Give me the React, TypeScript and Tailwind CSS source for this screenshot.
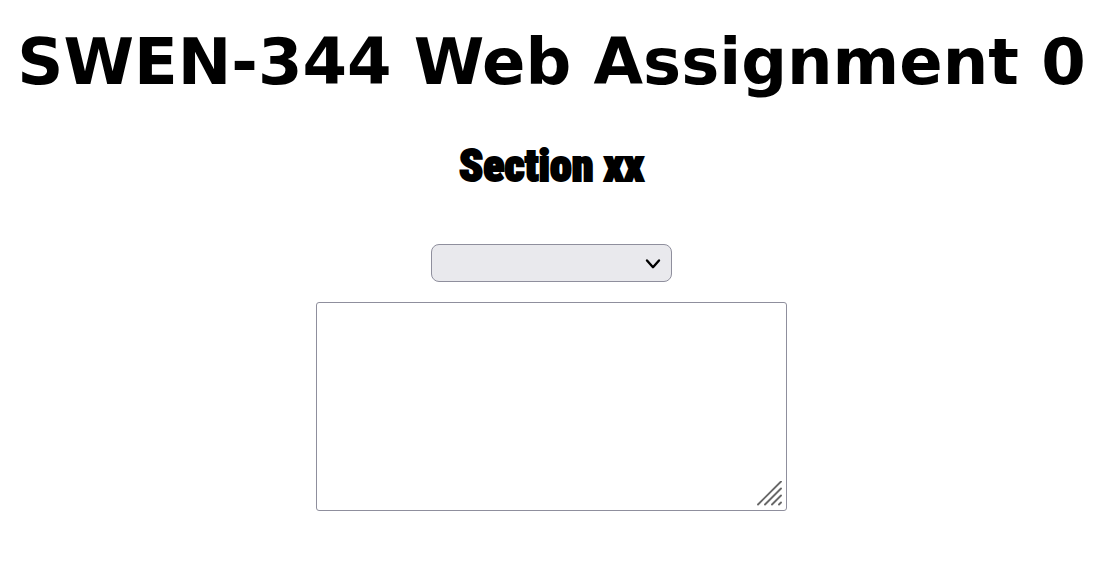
export default function App() {
  return (
    <main className="flex flex-col items-center bg-white pr-[17px] pb-[61px] text-black">
      <h1 className="mt-6 whitespace-nowrap font-[Verdana,'DejaVu_Sans',sans-serif] text-[64px] font-bold leading-[76px]">
        SWEN-344 Web Assignment 0
      </h1>
      <h2 className="mt-[38px] font-[Impact,'Roboto_Condensed',Roboto,sans-serif] text-[44px] font-black leading-[56px] [-webkit-text-stroke:2px_black]">
        Section xx
      </h2>
      <div className="relative mt-[50px] w-[241px]">
        <select
          aria-label="Section"
          className="block h-[38px] w-full appearance-none rounded-lg border border-[#8f8f9d] bg-[#e9e9ed] px-3 text-2xl outline-none"
        />
        <svg
          className="pointer-events-none absolute top-[14px] right-[11px] h-3 w-4"
          viewBox="0 0 16 12"
          fill="none"
          stroke="black"
          strokeWidth="2.4"
          strokeLinecap="round"
          strokeLinejoin="round"
          aria-hidden="true"
        >
          <path d="M2 2.5 8 9.2 14 2.5" />
        </svg>
      </div>
      <div className="relative mt-5 w-[471px]">
        <textarea
          aria-label="Comments"
          className="block h-[209px] w-full resize-none rounded-[3px] border border-[#8f8f9d] bg-white p-1 text-2xl outline-none"
        />
        <svg
          className="pointer-events-none absolute right-1 bottom-1 size-[26px]"
          viewBox="0 0 26 26"
          fill="none"
          stroke="#686868"
          strokeWidth="1.9"
          strokeLinecap="round"
          aria-hidden="true"
        >
          <path d="M1 23.5 24 .5M8 23.5 24 7.5M15 23.5 24 14.5M22 23.5 24 21.5" />
        </svg>
      </div>
    </main>
  );
}
